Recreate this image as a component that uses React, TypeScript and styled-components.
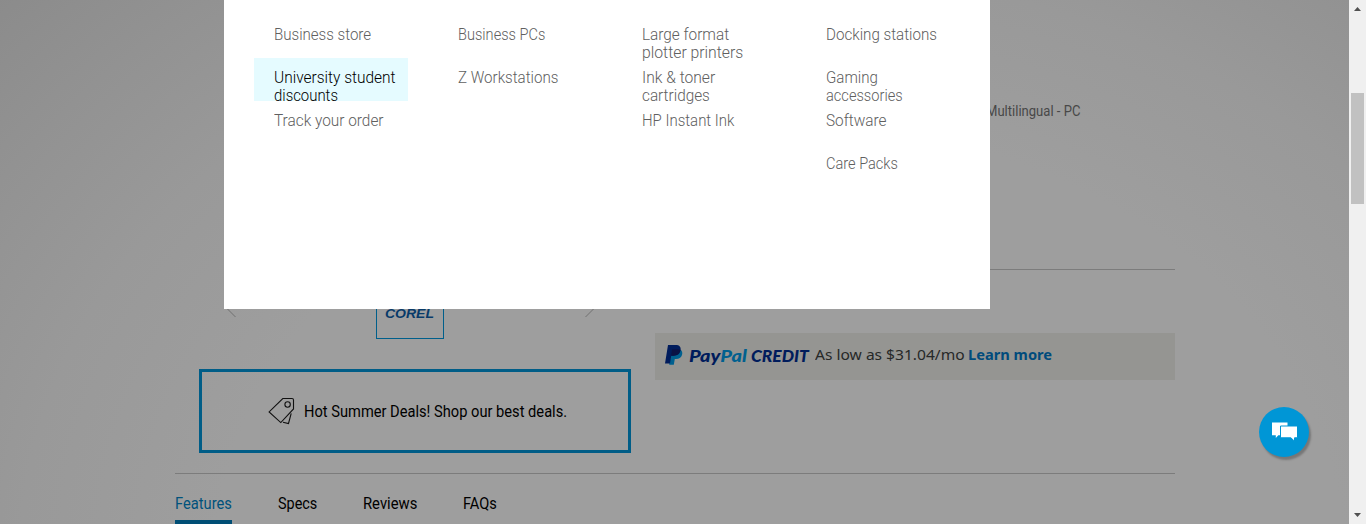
import React, { useLayoutEffect, useRef, useState } from 'react';
import styled, { createGlobalStyle } from 'styled-components';

const GlobalStyle = createGlobalStyle`
  * { box-sizing: border-box; }
  body {
    margin: 0;
    overflow: hidden;
    font-family: Roboto, "Liberation Sans", sans-serif;
  }
`;

const Page = styled.div`
  display: flex;
  width: 1366px;
  height: 524px;
  overflow: hidden;
`;

const Viewport = styled.div`
  position: relative;
  width: 1349px;
  height: 524px;
  overflow: hidden;
  background: radial-gradient(
    ellipse 1150px 892px at 780px 560px,
    #9e9e9e 49%,
    #999999 66%,
    #929292 80%,
    #8b8b8b 93%
  );
`;

/* Condensed text: squeezed horizontally to the set width. */
const FitBox = styled.span<{ $w: number }>`
  display: inline-block;
  width: ${(p) => p.$w}px;
  white-space: nowrap;
`;
const FitInner = styled.span`
  display: inline-block;
  transform-origin: 0 50%;
`;

function Fit({ w, children }: { w: number; children: React.ReactNode }) {
  const ref = useRef<HTMLSpanElement>(null);
  const [scale, setScale] = useState(1);
  useLayoutEffect(() => {
    if (ref.current) setScale(w / ref.current.offsetWidth);
  }, [w]);
  return (
    <FitBox $w={w}>
      <FitInner ref={ref} style={{ transform: `scaleX(${scale})` }}>{children}</FitInner>
    </FitBox>
  );
}

const Content = styled.main`
  width: 1000px;
  margin-left: 175px;
`;

const Product = styled.section`
  display: grid;
  grid-template-columns: 432px 520px;
  column-gap: 24px;
  height: 474px;
  padding-left: 24px;
  border-bottom: 1px solid #7c7c7c;
`;

const Gallery = styled.div`
  padding-top: 271px;
`;

const Thumbs = styled.div`
  display: flex;
  align-items: center;
  justify-content: space-between;
  height: 68px;
  padding: 0 36px 0 27px;
`;

const Chevron = styled.svg`
  width: 10px;
  height: 20px;
  margin-top: 5px;
  fill: none;
  stroke: #707070;
`;

const Thumb = styled.div`
  width: 68px;
  height: 68px;
  margin-right: 2px;
  padding: 34px 0 0 8px;
  border: 1px solid #005f8b;
  color: #083a69;
  font: italic bold 12px/16px "Liberation Sans", Arial, sans-serif;
`;

const Promo = styled.div`
  display: flex;
  align-items: center;
  height: 84px;
  margin-top: 30px;
  padding-left: 66px;
  border: 3px solid #005d87;
  color: #000;
  font-size: 17px;
  line-height: 20px;

  svg { margin-right: 7.5px; }
`;

const Details = styled.div`
  display: flex;
  flex-direction: column;
`;

const Spec = styled.div`
  height: 270px;
  padding: 102px 0 0 331px;
  border-bottom: 1px solid #7c7c7c;
  color: #484848;
  font-size: 15px;
  line-height: 18px;
`;

const Credit = styled.div`
  display: flex;
  align-items: flex-start;
  height: 47px;
  margin-top: 63px;
  padding: 11px 0 0 10px;
  background: #959592;
`;

const CreditLogo = styled.div`
  width: 120px;
  margin-left: 6px;
  color: #001c5c;
  font: italic 900 16.5px/24px Lato, sans-serif;
`;
const CreditPal = styled.span`
  color: #00608f;
`;
const CreditText = styled.div`
  margin: -1px 0 0 5.5px;
  color: #262828;
  font: 15px/22px "Noto Sans", sans-serif;
`;
const CreditLink = styled.a`
  margin: -1px 0 0 4px;
  color: #004b7c;
  font: bold 15px/22px "Noto Sans", sans-serif;
`;

const Tabs = styled.nav`
  display: flex;
  column-gap: 46px;
`;

const Tab = styled.a<{ $active?: boolean }>`
  height: 51px;
  padding-top: 19px;
  font-size: 17px;
  line-height: 20px;
  color: ${(p) => (p.$active ? '#00527c' : '#000')};
  border-bottom: 5px solid ${(p) => (p.$active ? '#004e75' : 'transparent')};
`;

const MegaMenu = styled.div`
  position: absolute;
  top: 0;
  left: 224px;
  display: flex;
  column-gap: 30px;
  width: 766px;
  height: 309px;
  padding: 15px 30px 0;
  background: #fff;
`;

const MenuColumn = styled.div`
  width: 154px;
`;

const MenuItem = styled.a<{ $active?: boolean }>`
  display: flex;
  flex-direction: column;
  height: 43px;
  padding: 10px 0 0 19.5px;
  font-size: 17px;
  font-weight: 300;
  line-height: 18px;
  color: ${(p) => (p.$active ? '#000' : '#606060')};
  background: ${(p) => (p.$active ? '#e5fbff' : 'transparent')};
`;

const ChatButton = styled.button`
  position: absolute;
  left: 1259px;
  top: 407px;
  width: 50px;
  height: 50px;
  padding: 0;
  border: 0;
  border-radius: 50%;
  background: #0096d6;
  box-shadow: 2px 3px 2px rgba(0, 0, 0, 0.25);

  svg { display: block; }
`;

const Scrollbar = styled.div`
  display: flex;
  flex-direction: column;
  align-items: center;
  width: 17px;
  height: 524px;
  padding: 7px 0;
  background: #f0f0f0;
`;
const ScrollThumb = styled.div`
  width: 13px;
  height: 111px;
  margin: 82px 0 auto;
  background: #c1c1c1;
`;

type Line = [string, number];
type Item = { lines: Line[]; active?: boolean };

const columns: Item[][] = [
  [
    { lines: [['Business store', 97.5]] },
    { lines: [['University student', 122], ['discounts', 64]], active: true },
    { lines: [['Track your order', 109.5]] },
  ],
  [{ lines: [['Business PCs', 87.5]] }, { lines: [['Z Workstations', 100.5]] }],
  [
    { lines: [['Large format', 87.5], ['plotter printers', 101]] },
    { lines: [['Ink & toner', 73.5], ['cartridges', 67.5]] },
    { lines: [['HP Instant Ink', 92.5]] },
  ],
  [
    { lines: [['Docking stations', 111.5]] },
    { lines: [['Gaming', 51.5], ['accessories', 76.5]] },
    { lines: [['Software', 60.5]] },
    { lines: [['Care Packs', 72]] },
  ],
];

const tabs: Line[] = [['Features', 57], ['Specs', 39], ['Reviews', 54], ['FAQs', 33.5]];

export default function App() {
  return (
    <>
      <GlobalStyle />
      <Page>
        <Viewport>
          <Content>
            <Product>
              <Gallery>
                <Thumbs>
                  <Chevron viewBox="0 0 10 20"><path d="M9.5 19 .5 10l9-9" /></Chevron>
                  <Thumb><Fit w={49}>COREL</Fit></Thumb>
                  <Chevron viewBox="0 0 10 20"><path d="M.5 19l9-9-9-9" /></Chevron>
                </Thumbs>
                <Promo>
                  <svg width="28" height="28" viewBox="0 0 28 28" fill="none" stroke="#111" strokeWidth="1.1">
                    <path d="M14.8 1.5H24q1.5 0 1.5 1.5v9L12.8 25.6 1.1 14.9z" />
                    <circle cx="19.6" cy="7.5" r="2.7" />
                    <path d="M23.2 16.3 20.5 26.5l-5.5-1.2" />
                  </svg>
                  <Fit w={263}>Hot Summer Deals! Shop our best deals.</Fit>
                </Promo>
              </Gallery>
              <Details>
                <Spec><Fit w={94}>Multilingual - PC</Fit></Spec>
                <Credit>
                  <svg width="18" height="22" viewBox="0 0 18 22">
                    <path fill="#00608f" d="M15 5.5c2.5 1.3 2.6 3.4 2 5.5-.8 2.8-3 4-6 4h-1.2l-1 5.8H4.2L6 9z" />
                    <path fill="#001c5c" d="M3 1h7.5c4 0 5.7 2 5 5.3-.7 3.8-3.3 5.4-7 5.4H6.2L5 19.4H0z" />
                    <path fill="#0a1245" d="M6.9 6.2Q7 5.2 8 5.2h4.8q1.4 0 2.7.6c-.6 4-3.2 5.9-7 5.9H6.1z" />
                  </svg>
                  <CreditLogo>
                    <Fit w={58}>Pay<CreditPal>Pal</CreditPal></Fit>
                    <span> </span>
                    <Fit w={58}>CREDIT</Fit>
                  </CreditLogo>
                  <CreditText><Fit w={149.5}>As low as $31.04/mo</Fit></CreditText>
                  <CreditLink><Fit w={84}>Learn more</Fit></CreditLink>
                </Credit>
              </Details>
            </Product>
            <Tabs>
              {tabs.map(([label, w], i) => (
                <Tab key={label} $active={i === 0}><Fit w={w}>{label}</Fit></Tab>
              ))}
            </Tabs>
          </Content>
          <MegaMenu>
            {columns.map((items, c) => (
              <MenuColumn key={c}>
                {items.map((item) => (
                  <MenuItem key={item.lines[0][0]} $active={item.active}>
                    {item.lines.map(([text, w]) => <Fit key={text} w={w}>{text}</Fit>)}
                  </MenuItem>
                ))}
              </MenuColumn>
            ))}
          </MegaMenu>
          <ChatButton aria-label="Chat">
            <svg width="50" height="50" viewBox="0 0 50 50">
              <path fill="#fff" d="M13 15.5h15.5v12.8h-9.2L16.8 31v-2.7H13z" />
              <path fill="#fff" stroke="#0096d6" strokeWidth="1" d="M21.5 19H38.5v11.8h-3v3.4l-3.6-3.4H21.5z" />
            </svg>
          </ChatButton>
        </Viewport>
        <Scrollbar>
          <svg width="7" height="4" viewBox="0 0 7 4" fill="#505050"><path d="M0 4 3.5 0 7 4z" /></svg>
          <ScrollThumb />
          <svg width="7" height="4" viewBox="0 0 7 4" fill="#505050"><path d="M0 0h7L3.5 4z" /></svg>
        </Scrollbar>
      </Page>
    </>
  );
}
